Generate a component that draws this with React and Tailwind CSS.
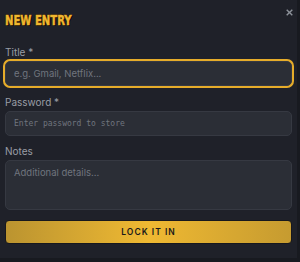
import React from "react";

const FIELD =
    "block w-full bg-[#2b2e36] border border-[#363942] rounded-[5px] px-[8px] text-[#d1d5db] outline-none placeholder:text-[#70757e]";

const Label = ({ children }) => (
    <label className="block text-[10px] leading-[12px] text-[#9a9ea6] mb-[3px]">{children}</label>
);

const NewEntry = () => {
    return (
        <div className="w-[300px] h-[262px] bg-[#1f2129] border-r-[3px] border-[#181a20] relative overflow-hidden font-['Inter','Noto_Sans',sans-serif]">
            {/* Close */}
            <button className="absolute top-[9px] right-[4px] w-[7px] h-[7px] text-[#8d929a]" aria-label="Close">
                <svg viewBox="0 0 10 10" className="w-[7px] h-[7px] block" stroke="currentColor" strokeWidth="2">
                    <path d="M1 1 L9 9 M9 1 L1 9" />
                </svg>
            </button>

            <div className="px-[5px]">
                {/* Header */}
                <h2 className="pt-[12px] h-[46px] text-[14px] leading-[17px] font-bold text-[#f0b72f] origin-left scale-x-[0.8] font-['DejaVu_Sans_Condensed','DejaVu_Sans',sans-serif] [-webkit-text-stroke:0.5px_#f0b72f] [text-shadow:1px_1px_0_#000,-1px_0_0_#111,0_-1px_0_#111,1px_0_0_#0a0a0a]">
                    NEW ENTRY
                </h2>

                <Label>Title *</Label>
                <input
                    className={FIELD + " h-[25px] text-[9.5px] ring-2 ring-[#e6ac2a] border-[#1f2129]"}
                    placeholder="e.g. Gmail, Netflix..."
                />

                <div className="mt-[10px]">
                    <Label>Password *</Label>
                    <input
                        type="password"
                        className={FIELD + " h-[25px] text-[8px] font-['DejaVu_Sans_Mono','Liberation_Mono',monospace]"}
                        placeholder="Enter password to store"
                    />
                </div>

                <div className="mt-[9px]">
                    <Label>Notes</Label>
                    <textarea
                        className={FIELD + " h-[50px] py-[5px] text-[9.5px] resize-none"}
                        placeholder="Additional details..."
                    />
                </div>

                <button className="block mt-[10px] w-full h-[24px] rounded-[4px] border border-[#17181d] bg-gradient-to-r from-[#bb9430] via-[#efb932] to-[#c69b30] text-[#1a1a1a] text-[8.5px] font-semibold tracking-[1px]">
                    LOCK IT IN
                </button>
            </div>

            <div className="absolute left-0 right-0 bottom-0 h-[4px] bg-[#181a20]" />
        </div>
    );
};

export default function App() {
    return <NewEntry />;
}
